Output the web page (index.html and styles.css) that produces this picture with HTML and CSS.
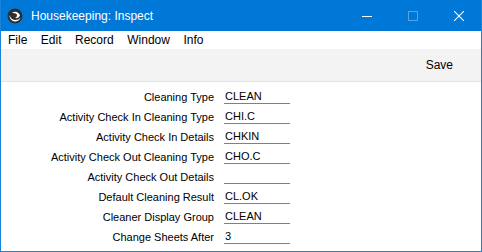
FILE: index.html
```html
<!DOCTYPE html>
<html lang="en">
<head>
<meta charset="UTF-8">
<title>Housekeeping: Inspect</title>
<link rel="stylesheet" href="styles.css">
</head>
<body>
<div class="window">
  <div class="titlebar">
    <svg class="appicon" width="16" height="16" viewBox="0 0 16 16">
      <circle cx="8" cy="8" r="7.5" fill="#2a2f36"/>
      <path d="M2.5 7 C3.5 12 10 14 13.5 9.5 C12.5 13 8 15 5 12.5 C3 11 2.3 9 2.5 7 Z" fill="#fff"/>
      <path d="M5 5 C7.5 3 11.5 3.5 13 7.5 C12 9.5 10 10.5 8 10 C10 9 10.5 7.5 9.5 6 C8.5 5 6.5 5 5 5 Z" fill="#fff"/>
    </svg>
    <div class="wintitle">Housekeeping: Inspect</div>
    <div class="controls">
      <span class="ctl"><svg width="10" height="10" viewBox="0 0 10 10"><line x1="0" y1="5.5" x2="10" y2="5.5" stroke="#fff" stroke-width="1"/></svg></span>
      <span class="ctl"><svg width="10" height="10" viewBox="0 0 10 10"><rect x="0.5" y="0.5" width="9" height="9" fill="none" stroke="#5aa2e6" stroke-width="1"/></svg></span>
      <span class="ctl"><svg width="10" height="10" viewBox="0 0 10 10"><path d="M0 0 L10 10 M10 0 L0 10" stroke="#fff" stroke-width="1.1"/></svg></span>
    </div>
  </div>
  <div class="menubar">
    <span class="menu">File</span>
    <span class="menu">Edit</span>
    <span class="menu">Record</span>
    <span class="menu">Window</span>
    <span class="menu">Info</span>
  </div>
  <div class="toolbar">
    <span class="savebtn">Save</span>
  </div>
  <div class="form">
    <div class="lbl">Cleaning Type</div><div class="fld">CLEAN</div>
    <div class="lbl">Activity Check In Cleaning Type</div><div class="fld">CHI.C</div>
    <div class="lbl">Activity Check In Details</div><div class="fld">CHKIN</div>
    <div class="lbl">Activity Check Out Cleaning Type</div><div class="fld">CHO.C</div>
    <div class="lbl">Activity Check Out Details</div><div class="fld"></div>
    <div class="lbl">Default Cleaning Result</div><div class="fld">CL.OK</div>
    <div class="lbl">Cleaner Display Group</div><div class="fld">CLEAN</div>
    <div class="lbl">Change Sheets After</div><div class="fld">3</div>
  </div>
</div>
</body>
</html>
```

FILE: styles.css
```css
body{
margin:0;
background:#fff;
font-family:"Liberation Sans",Arial,sans-serif;
}
.window{
width:482px;
height:252px;
box-sizing:border-box;
border:1px solid #1883d7;
border-top:none;
display:flex;
flex-direction:column;
background:#fff;
overflow:hidden;
}
.titlebar{
height:31px;
margin:0 -1px;
background:#0078d7;
color:#fff;
display:flex;
align-items:center;
}
.appicon{
margin-left:7px;
margin-right:8px;
}
.wintitle{
font-size:12px;
flex:1;
}
.controls{
display:flex;
height:31px;
}
.ctl{
width:46px;
display:flex;
align-items:center;
justify-content:center;
}
.menubar{
height:18px;
display:flex;
align-items:center;
font-size:12px;
color:#000;
padding-left:7px;
}
.menu{
margin-right:13.5px;
}
.toolbar{
height:32px;
background:#f3f3f3;
border-bottom:1px solid #e3e3e3;
display:flex;
align-items:center;
justify-content:flex-end;
padding-right:28px;
font-size:12px;
}
.form{
padding-top:5px;
display:grid;
grid-template-columns:213px 66px;
column-gap:10px;
grid-auto-rows:20px;
font-size:11px;
color:#000;
}
.lbl{
text-align:right;
line-height:20px;
white-space:nowrap;
}
.fld{
height:16px;
line-height:18px;
border-bottom:1px solid #808080;
padding-left:1px;
}
```
